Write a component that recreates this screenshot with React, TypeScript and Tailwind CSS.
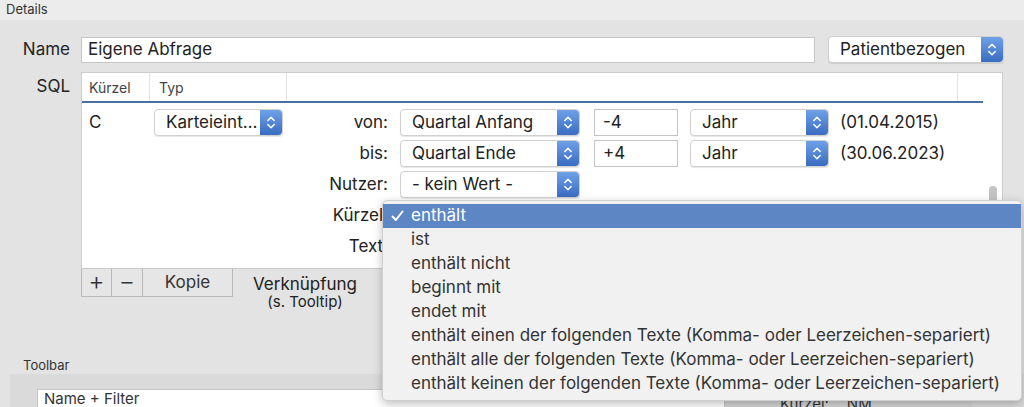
import React from 'react';
import clsx from 'clsx';

const font = { fontFamily: 'Inter, "Noto Sans", sans-serif' };

const Stepper = () => (
    <span className="flex h-full w-[22px] shrink-0 items-center justify-center rounded-r-[4px] bg-linear-to-b from-[#6fa1e8] to-[#3a6cc0]">
        <svg width="10" height="15" viewBox="0 0 10 15" fill="none" stroke="white" strokeWidth="1.5" strokeLinecap="round" strokeLinejoin="round">
            <path d="M1.8 5.5 L5 2.3 L8.2 5.5" />
            <path d="M1.8 9.5 L5 12.7 L8.2 9.5" />
        </svg>
    </span>
);

interface PopupProps {
    label: string;
    className?: string;
}

const Popup: React.FC<PopupProps> = ({ label, className }) => (
    <div className={clsx('flex h-[27px] items-center rounded-[4px] border border-[#d0d0d0] bg-white shadow-[0_1px_1px_rgba(0,0,0,0.1)]', className)}>
        <span className="flex-1 overflow-hidden whitespace-nowrap pl-[11px] text-[17px] text-[#222]">{label}</span>
        <Stepper />
    </div>
);

const TextField: React.FC<{ value: string }> = ({ value }) => (
    <div className="flex h-[27px] w-[84px] items-center border border-[#c4c4c4] bg-white pl-[8px] text-[17px] text-[#222]">
        {value}
    </div>
);

const menuItems = [
    'enthält',
    'ist',
    'enthält nicht',
    'beginnt mit',
    'endet mit',
    'enthält einen der folgenden Texte (Komma- oder Leerzeichen-separiert)',
    'enthält alle der folgenden Texte (Komma- oder Leerzeichen-separiert)',
    'enthält keinen der folgenden Texte (Komma- oder Leerzeichen-separiert)',
];

const Row: React.FC<{ label: string; children?: React.ReactNode }> = ({ label, children }) => (
    <div className="flex h-[27px] items-center">
        <span className="w-[101px] text-right text-[17px] text-[#222]">{label}</span>
        <div className="ml-[12px] flex items-center">{children}</div>
    </div>
);

export default function App() {
    return (
        <div style={font} className="relative h-[407px] w-[1024px] overflow-hidden bg-[#e3e3e3] text-[#222]">
            {/* Details header */}
            <div className="flex h-[20px] items-center bg-[#ececec] pl-[6px] text-[13px] text-[#333]">Details</div>

            {/* Name row */}
            <div className="mt-[16px] flex items-center">
                <span className="w-[70px] text-right text-[17px]">Name</span>
                <div className="ml-[11px] flex h-[26px] w-[734px] items-center border border-[#c6c6c6] bg-white pl-[6px] text-[17px]">
                    Eigene Abfrage
                </div>
                <Popup label="Patientbezogen" className="ml-[13px] w-[176px]" />
            </div>

            {/* SQL row */}
            <div className="mt-[9px] flex items-start">
                <span className="mt-[2px] w-[70px] text-right text-[17px]">SQL</span>
                <div className="ml-[11px] flex flex-col">
                    <div className="w-[922px] border-x border-t border-[#cdcdcd] bg-white">
                        {/* header */}
                        <div className="flex h-[28px] items-center text-[14px] text-[#444]">
                            <span className="flex h-full w-[68px] items-center border-r border-[#e2e2e2] pl-[7px]">Kürzel</span>
                            <span className="flex h-full w-[137px] items-center border-r border-[#e2e2e2] pl-[9px]">Typ</span>
                            <span className="h-full w-[671px] border-r border-[#e2e2e2]" />
                        </div>
                        <div className="h-[2px] w-[901px] bg-[#4d70a4]" />
                        {/* body */}
                        <div className="flex h-[165px]">
                            <div className="flex w-[901px] pt-[6px]">
                                <div className="flex h-[27px] w-[68px] items-center pl-[7px] text-[17px]">C</div>
                                <div className="w-[137px] pl-[4px]">
                                    <Popup label="Karteieint…" className="w-[129px]" />
                                </div>
                                <div className="flex flex-col gap-[4px]">
                                    <Row label="von:">
                                        <Popup label="Quartal Anfang" className="w-[180px]" />
                                        <div className="ml-[14px]"><TextField value="-4" /></div>
                                        <Popup label="Jahr" className="ml-[12px] w-[139px]" />
                                        <span className="ml-[11px] text-[17px]">(01.04.2015)</span>
                                    </Row>
                                    <Row label="bis:">
                                        <Popup label="Quartal Ende" className="w-[180px]" />
                                        <div className="ml-[14px]"><TextField value="+4" /></div>
                                        <Popup label="Jahr" className="ml-[12px] w-[139px]" />
                                        <span className="ml-[11px] text-[17px]">(30.06.2023)</span>
                                    </Row>
                                    <Row label="Nutzer:">
                                        <Popup label="- kein Wert -" className="w-[180px]" />
                                    </Row>
                                    <Row label="Kürzel:">
                                        <Popup label="enthält" className="w-[180px]" />
                                    </Row>
                                    <Row label="Text:">
                                        <div className="h-[27px] w-[300px] border border-[#c4c4c4] bg-white" />
                                    </Row>
                                </div>
                            </div>
                            <div className="w-[19px] pl-[6px] pt-[83px]">
                                <div className="h-[60px] w-[8px] rounded-full bg-[#c3c3c3]" />
                            </div>
                        </div>
                    </div>
                    {/* buttons */}
                    <div className="flex items-start border-t border-[#c8c8c8]">
                        <div className="flex h-[28px] border-x border-b border-[#b8b8b8] bg-[#e6e6e6] text-[17px] text-[#333]">
                            <span className="flex w-[30px] items-center justify-center border-r border-[#b8b8b8] pb-[2px] text-[25px] leading-none font-light text-[#333]">+</span>
                            <span className="flex w-[31px] items-center justify-center border-r border-[#b8b8b8] pb-[2px] text-[25px] leading-none font-light text-[#333]">−</span>
                            <span className="flex w-[89px] items-center justify-center">Kopie</span>
                        </div>
                        <div className="flex w-[144px] flex-col items-center pt-[6px] leading-[18px]">
                            <span className="text-[17px]">Verknüpfung</span>
                            <span className="text-[15px]">(s. Tooltip)</span>
                        </div>
                    </div>
                </div>
            </div>

            {/* Toolbar section */}
            <div className="mt-[46px] pl-[23px] text-[13px] leading-[16px] text-[#333]">Toolbar</div>
            <div className="ml-[10px] mt-[1px] flex h-[40px] bg-[#dadada] pl-[27px] pt-[15px]">
                <div className="flex h-[30px] w-[688px] items-start border border-[#c6c6c6] bg-white pl-[6px] text-[15px] leading-[18px] text-[#333]">
                    Name + Filter
                </div>
                <div className="flex w-[247px] items-start bg-[#d4d4d4] pl-[55px] pt-[6px] text-[15px] leading-[18px] text-[#333]">
                    <span>Kürzel:</span>
                    <span className="ml-[18px]">NM</span>
                </div>
            </div>

            {/* Open popup menu */}
            <div className="absolute left-[382px] top-[200px] h-[201px] w-[640px] rounded-[5px] border border-[#d0d0d0] bg-[#f1f1f1] pt-[3px] shadow-[0_3px_10px_rgba(0,0,0,0.25)]">
                {menuItems.map((item, i) => (
                    <div
                        key={item}
                        className={clsx(
                            'relative flex h-[24px] items-center pl-[28px] text-[17px]',
                            i === 0 ? 'bg-[#5d87c4] text-white' : 'text-[#333]'
                        )}
                    >
                        {i === 0 && (
                            <svg className="absolute left-[8px] top-[6px]" width="13" height="12" viewBox="0 0 13 12" fill="none" stroke="white" strokeWidth="2" strokeLinecap="round" strokeLinejoin="round">
                                <path d="M1.5 6.5 L4.8 10 L11.5 1.5" />
                            </svg>
                        )}
                        {item}
                    </div>
                ))}
            </div>
        </div>
    );
}
